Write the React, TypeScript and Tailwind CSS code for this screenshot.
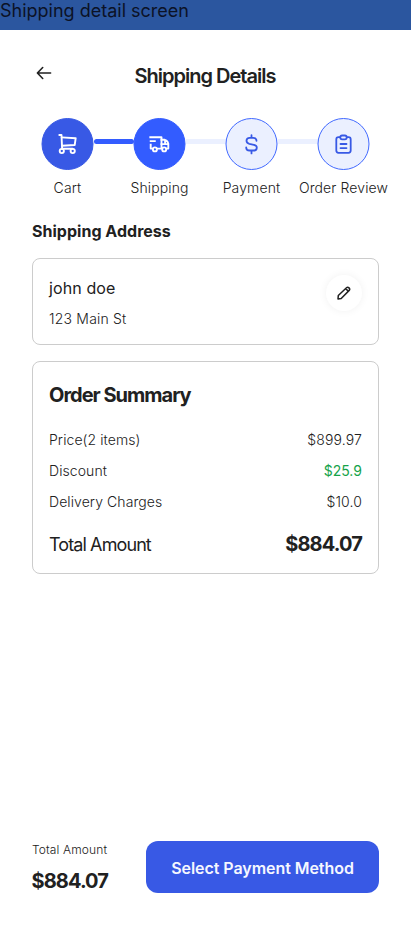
import React from 'react';

function CartIcon() {
  return (
    <svg width="20" height="22" viewBox="0 0 20 22" fill="none" stroke="#fff" strokeWidth="1.9" strokeLinecap="round" strokeLinejoin="round">
      <path d="M1.8 2H4L4.6 15.6" />
      <path d="M4.2 4.4L18.2 5.2L17.2 12L4.5 12.8" />
      <circle cx="4.3" cy="18" r="2.1" />
      <circle cx="15.2" cy="18" r="2.1" />
      <path d="M4.4 15.8H15" />
    </svg>
  );
}

function TruckIcon() {
  return (
    <svg width="22" height="18" viewBox="0 0 22 18" fill="none" stroke="#fff" strokeWidth="1.9" strokeLinecap="square" strokeLinejoin="round">
      <path d="M1.8 2.3H13V13.6H9.4" />
      <path d="M2.2 6.1H6.3M2.2 9.8V13.6H4" />
      <path d="M13 4.8H16.3Q19.8 5.8 19.8 9.8V13.6H18.5M13 9.1H19.8M16.6 5.3V9.1" />
      <circle cx="6.4" cy="14.4" r="2" />
      <circle cx="15.7" cy="14.4" r="2" />
    </svg>
  );
}

function DollarIcon() {
  return (
    <svg width="14" height="22" viewBox="0 0 14 22" fill="none" stroke="#3859e5" strokeWidth="1.8" strokeLinecap="round">
      <path d="M7 2.2V4.9M7 17.4V20.4M12 7.8C12 6 10.6 4.9 8.8 4.9H5.2C3.3 4.9 2 6.1 2 7.8C2 9.7 3.2 10.4 4.8 10.8L9.4 11.8C11.4 12.3 12.3 13.1 12.3 14.4C12.3 16.3 11 17.5 9.1 17.5H5C3 17.5 1.7 16.3 1.7 14.4" />
    </svg>
  );
}

function ClipboardIcon() {
  return (
    <svg width="18" height="20" viewBox="0 0 18 20" fill="none" stroke="#3859e5" strokeWidth="1.8" strokeLinecap="round" strokeLinejoin="round">
      <path d="M5.7 3.2H4C2.6 3.2 1.8 4 1.8 5.4V16.6C1.8 18 2.6 18.8 4 18.8H14C15.4 18.8 16.2 18 16.2 16.6V5.4C16.2 4 15.4 3.2 14 3.2H12.3" />
      <rect x="5.8" y="1.5" width="6.4" height="3.9" rx="1.8" />
      <path d="M6 10H12M6 14.1H12" />
    </svg>
  );
}

function Connector({ color }: { color: string }) {
  return <div className={`mt-[21px] h-[5px] flex-1 ${color}`} />;
}

type StepProps = {
  label: string;
  icon: React.ReactNode;
  circle: string;
};

function Step({ label, icon, circle }: StepProps) {
  return (
    <div className="flex w-[52px] shrink-0 flex-col items-center">
      <div className={`flex size-[52px] shrink-0 -translate-x-[0.5px] items-center justify-center rounded-full border ${circle}`}>{icon}</div>
      <span className="mt-2 text-sm leading-5 font-light tracking-[0.12px] whitespace-nowrap">{label}</span>
    </div>
  );
}

function SummaryRow({ label, value, color = 'font-light tracking-[0.14px]' }: { label: string; value: string; color?: string }) {
  return (
    <div className="flex h-[31px] items-center justify-between text-sm">
      <span className="font-light tracking-[0.08px]">{label}</span>
      <span className={color}>{value}</span>
    </div>
  );
}

export default function App() {
  return (
    <div className="flex h-[926px] w-[411px] flex-col overflow-hidden bg-white font-['Inter',sans-serif] text-[#212121]">
      <div className="h-[30px] shrink-0 bg-[#2b569f] text-lg leading-[22px] text-[#0b1226]">Shipping detail screen</div>

      <header className="mt-8 grid h-7 shrink-0 grid-cols-[1fr_auto_1fr] items-center pr-[33px] pl-8">
        <svg className="-mt-1.5 ml-1" width="16" height="14" viewBox="0 0 16 14" fill="none" stroke="#212121" strokeWidth="1.6" strokeLinecap="round" strokeLinejoin="round">
          <path d="M14.6 7H1.6M6.7 1.5L1.4 7L6.7 12.5" />
        </svg>
        <h1 className="text-xl font-semibold tracking-[-1px]">Shipping Details</h1>
      </header>

      <div className="mt-7 flex h-20 shrink-0 items-start pr-[41.5px] pl-[41.5px]">
        <Step label="Cart" circle="border-[#3859e5] bg-[#3859e5]" icon={<CartIcon />} />
        <Connector color="rounded-full bg-[#335cff]" />
        <Step label="Shipping" circle="border-[#335cff] bg-[#335cff]" icon={<TruckIcon />} />
        <Connector color="bg-[#ebf0ff]" />
        <Step label="Payment" circle="border-[#4169ff] bg-[#ebf0ff]" icon={<DollarIcon />} />
        <Connector color="bg-[#ebf0ff]" />
        <Step label="Order Review" circle="border-[#4169ff] bg-[#ebf0ff]" icon={<ClipboardIcon />} />
      </div>

      <main className="flex flex-1 flex-col px-8 pt-[21px]">
        <h2 className="text-base leading-6 font-bold tracking-[0.02px]">Shipping Address</h2>
        <section className="mt-[15px] flex h-[87px] justify-between rounded-lg border border-[#cccccc] pt-4 pr-4 pl-4">
          <div>
            <p className="text-base leading-[26px] tracking-[0.1px]">john doe</p>
            <p className="mt-2 text-sm leading-5 font-light tracking-[0.2px]">123 Main St</p>
          </div>
          <button className="flex size-9 items-center justify-center rounded-full bg-white shadow-[0_0_8px_rgba(40,40,20,0.06)]">
            <svg width="14" height="14" viewBox="0 0 14 14" fill="none" stroke="#212121" strokeWidth="1.5" strokeLinejoin="round">
              <path d="M1 13L1.3 9.5L9.5 1.7Q10.7.6 12 1.9Q13.3 3.2 12.2 4.4L4.2 12.5ZM8.7 2.6L11.3 5.2" />
            </svg>
          </button>
        </section>

        <section className="mt-4 flex h-[213px] flex-col rounded-lg border border-[#cccccc] px-4 pt-[19px]">
          <h2 className="mb-[15px] text-xl leading-7 font-bold tracking-[-1px]">Order Summary</h2>
          <SummaryRow label="Price(2 items)" value="$899.97" />
          <SummaryRow label="Discount" value="$25.9" color="tracking-[0.02px] text-[#16a34a]" />
          <SummaryRow label="Delivery Charges" value="$10.0" />
          <div className="mt-[13px] flex items-start justify-between">
            <span className="pt-px text-lg leading-7 tracking-[-0.9px]">Total Amount</span>
            <span className="text-xl leading-7 font-bold tracking-[-0.85px]">$884.07</span>
          </div>
        </section>

        <footer className="mt-auto mb-[33px] flex h-[52px] items-start justify-between">
          <div className="flex flex-col pt-px">
            <span className="text-xs leading-4 font-light tracking-[0.13px]">Total Amount</span>
            <span className="-ml-[0.5px] mt-[9px] text-xl leading-7 font-bold tracking-[-0.9px]">$884.07</span>
          </div>
          <button className="h-[52px] w-[233px] rounded-xl bg-[#3859e5] pt-px text-base font-semibold tracking-[-0.05px] text-[#f5f7ff]">Select Payment Method</button>
        </footer>
      </main>
    </div>
  );
}
